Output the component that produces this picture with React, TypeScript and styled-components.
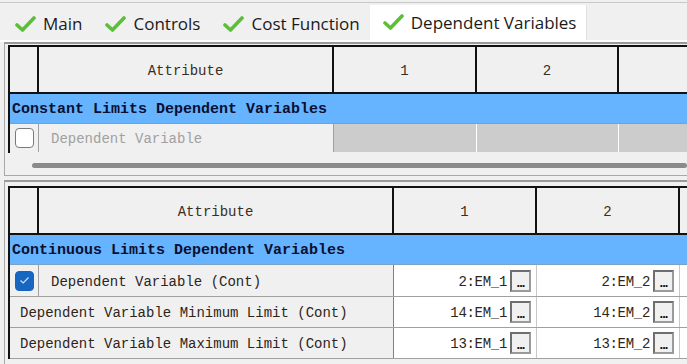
import { FC } from "react";
import styled, { createGlobalStyle } from "styled-components";

const GlobalStyle = createGlobalStyle`
  html, body {
    margin: 0;
    padding: 0;
    background: #f0f0f0;
    overflow: hidden;
  }
`

const Page = styled.div`
  width: 687px;
  height: 364px;
  overflow: hidden;
  background: #f0f0f0;
  display: flex;
  flex-direction: column;
`

const TabBar = styled.div`
  flex: none;
  height: 38px;
  margin-top: 2px;
  border-top: 1px solid #c8c8c8;
  display: flex;
  align-items: flex-end;
  padding-left: 4px;
  box-sizing: border-box;
`

const Tab = styled.div<{ $active?: boolean }>`
  height: ${p => (p.$active ? "35px" : "33px")};
  display: flex;
  align-items: center;
  gap: 7px;
  padding: 0 ${p => (p.$active ? "10px" : "12px")} 0 ${p => (p.$active ? "13px" : "11px")};
  background: ${p => (p.$active ? "#ffffff" : "transparent")};
  border-right: ${p => (p.$active ? "1px solid #e2e2e2" : "none")};
  margin-left: ${p => (p.$active ? "-2px" : "0")};
  font-family: "Open Sans", "Noto Sans", sans-serif;
  font-size: 17px;
  color: #1a1a1a;
  box-sizing: border-box;
  padding-bottom: ${p => (p.$active ? "1px" : "0")};
`

const Check: FC = () => (
  <svg width="21" height="16" viewBox="0 0 21 16">
    <path d="M2 9 L7.5 14 L19 2" fill="none" stroke="#5cbf3a" strokeWidth="3.6" strokeLinecap="round" strokeLinejoin="round" />
  </svg>
)

const Content = styled.div`
  flex: none;
  border-top: 2px solid #ffffff;
  display: flex;
  flex-direction: column;
  gap: 4px;
  padding-left: 4px;
`

const Panel = styled.div<{ $h: number; $pad: number }>`
  flex: none;
  height: ${p => p.$h}px;
  border: 1px solid #a8a8a8;
  border-top: 2px solid #9a9a9a;
  border-right: none;
  padding: ${p => p.$pad}px 0 0 3px;
  box-sizing: border-box;
  overflow: hidden;
  display: flex;
  flex-direction: column;
`

const Grid = styled.div`
  flex: none;
  border-left: 2px solid #111;
  border-top: 2px solid #111;
  display: flex;
  flex-direction: column;
  width: 760px;
`

const Row = styled.div<{ $h: number; $line?: string }>`
  display: flex;
  height: ${p => p.$h}px;
  border-bottom: 1px solid ${p => p.$line ?? "#a0a0a0"};
  box-sizing: border-box;
`

const HeadCell = styled.div<{ $w: number }>`
  width: ${p => p.$w}px;
  flex: none;
  box-sizing: border-box;
  border-right: 2px solid #111;
  display: flex;
  align-items: center;
  justify-content: center;
  padding-top: 3px;
  font-family: "Liberation Mono", monospace;
  font-size: 14px;
  color: #3a2e22;
  background: #f0f0f0;
`

const HeadRow = styled.div`
  display: flex;
  height: 47px;
  border-bottom: 2px solid #111;
  box-sizing: border-box;
`

const GroupRow = styled.div`
  height: 30px;
  background: #66b3ff;
  border-bottom: 1px solid #7fa0c0;
  box-sizing: border-box;
  display: flex;
  align-items: center;
  padding: 2px 0 0 2px;
  font-family: "Liberation Mono", monospace;
  font-weight: bold;
  font-size: 15px;
  color: #0b1030;
`

const Cell = styled.div<{ $w: number; $bg?: string; $line?: string }>`
  width: ${p => p.$w}px;
  flex: none;
  border-right: 1px solid ${p => p.$line ?? "#a0a0a0"};
  background: ${p => p.$bg ?? "#f0f0f0"};
  display: flex;
  align-items: center;
  box-sizing: border-box;
`

const BoxCell = styled(Cell)`
  justify-content: center;
`

const Label = styled.span<{ $muted?: boolean; $pad: number }>`
  padding: 2px 0 0 ${p => p.$pad}px;
  font-family: "Liberation Mono", monospace;
  font-size: 14px;
  color: ${p => (p.$muted ? "#a0a0a0" : "#2e2418")};
  white-space: nowrap;
`

const CheckBox = styled.div<{ $on?: boolean }>`
  width: 19px;
  height: 20px;
  border-radius: 4px;
  box-sizing: border-box;
  border: 1px solid ${p => (p.$on ? "#1764c0" : "#7a7a7a")};
  background: ${p => (p.$on ? "#1766c2" : "#ffffff")};
  display: flex;
  align-items: center;
  justify-content: center;
`

const ValueCell = styled(Cell)`
  justify-content: flex-end;
  gap: 3px;
  padding-right: 5px;
  background: #ffffff;
  border-right: 1px solid #c8c8c8;
`

const Value = styled.span`
  padding-top: 2px;
  font-family: "Liberation Mono", monospace;
  font-size: 14px;
  color: #2e2418;
  letter-spacing: -0.3px;
`

const DotsButton = styled.div`
  width: 21px;
  height: 22px;
  box-sizing: border-box;
  border: 2px solid #6e6e6e;
  border-right-color: #9a9a9a;
  border-bottom-color: #9a9a9a;
  background: #f0f0f0;
  display: flex;
  align-items: flex-end;
  justify-content: center;
  padding-bottom: 3px;
  font-family: "Liberation Sans", sans-serif;
  font-weight: bold;
  font-size: 13px;
  line-height: 8px;
  color: #111;
  letter-spacing: -1px;
`

const ScrollArea = styled.div`
  height: 22px;
  display: flex;
  align-items: center;
  padding-left: 24px;
  padding-top: 2px;
`

const ScrollThumb = styled.div`
  height: 5px;
  width: 700px;
  border-radius: 3px;
  background: #8a8a8a;
`

const tabs = ["Main", "Controls", "Cost Function"]

const contRows = [
  { label: "Dependent Variable Minimum Limit (Cont)", v: ["14:EM_1", "14:EM_2"] },
  { label: "Dependent Variable Maximum Limit (Cont)", v: ["13:EM_1", "13:EM_2"] },
]

const App: FC = () => (
  <Page>
    <GlobalStyle />
    <TabBar>
      {tabs.map(t => (
        <Tab key={t}>
          <Check />
          {t}
        </Tab>
      ))}
      <Tab $active>
        <Check />
        Dependent Variables
      </Tab>
    </TabBar>
    <Content>
      <Panel $h={134} $pad={1}>
        <Grid>
          <HeadRow>
            <HeadCell $w={29} />
            <HeadCell $w={295}>Attribute</HeadCell>
            <HeadCell $w={143}>1</HeadCell>
            <HeadCell $w={142}>2</HeadCell>
            <HeadCell $w={143} />
          </HeadRow>
          <GroupRow>Constant Limits Dependent Variables</GroupRow>
          <Row $h={29} $line="#f0f0f0">
            <BoxCell $w={29}>
              <CheckBox />
            </BoxCell>
            <Cell $w={295}>
              <Label $muted $pad={12}>Dependent Variable</Label>
            </Cell>
            <Cell $w={143} $bg="#cccccc" $line="#ffffff" />
            <Cell $w={142} $bg="#cccccc" $line="#ffffff" />
            <Cell $w={143} $bg="#cccccc" $line="#ffffff" />
          </Row>
        </Grid>
        <ScrollArea>
          <ScrollThumb />
        </ScrollArea>
      </Panel>
      <Panel $h={190} $pad={4}>
        <Grid>
          <HeadRow>
            <HeadCell $w={29} />
            <HeadCell $w={355}>Attribute</HeadCell>
            <HeadCell $w={143}>1</HeadCell>
            <HeadCell $w={143}>2</HeadCell>
            <HeadCell $w={143} />
          </HeadRow>
          <GroupRow>Continuous Limits Dependent Variables</GroupRow>
          <Row $h={32}>
            <BoxCell $w={29}>
              <CheckBox $on>
                <svg width="11" height="9" viewBox="0 0 11 9">
                  <path d="M1.5 4.5 L4.2 7 L9.5 1.5" fill="none" stroke="#cfe2f7" strokeWidth="1.2" />
                </svg>
              </CheckBox>
            </BoxCell>
            <Cell $w={355} $line="#808080">
              <Label $pad={12}>Dependent Variable (Cont)</Label>
            </Cell>
            <ValueCell $w={143}>
              <Value>2:EM_1</Value>
              <DotsButton>...</DotsButton>
            </ValueCell>
            <ValueCell $w={143}>
              <Value>2:EM_2</Value>
              <DotsButton>...</DotsButton>
            </ValueCell>
            <ValueCell $w={143} />
          </Row>
          {contRows.map(r => (
            <Row $h={31} key={r.label}>
              <Cell $w={384} $line="#808080">
                <Label $pad={10}>{r.label}</Label>
              </Cell>
              {r.v.map(v => (
                <ValueCell $w={143} key={v}>
                  <Value>{v}</Value>
                  <DotsButton>...</DotsButton>
                </ValueCell>
              ))}
              <ValueCell $w={143} />
            </Row>
          ))}
        </Grid>
      </Panel>
    </Content>
  </Page>
)

export default App
